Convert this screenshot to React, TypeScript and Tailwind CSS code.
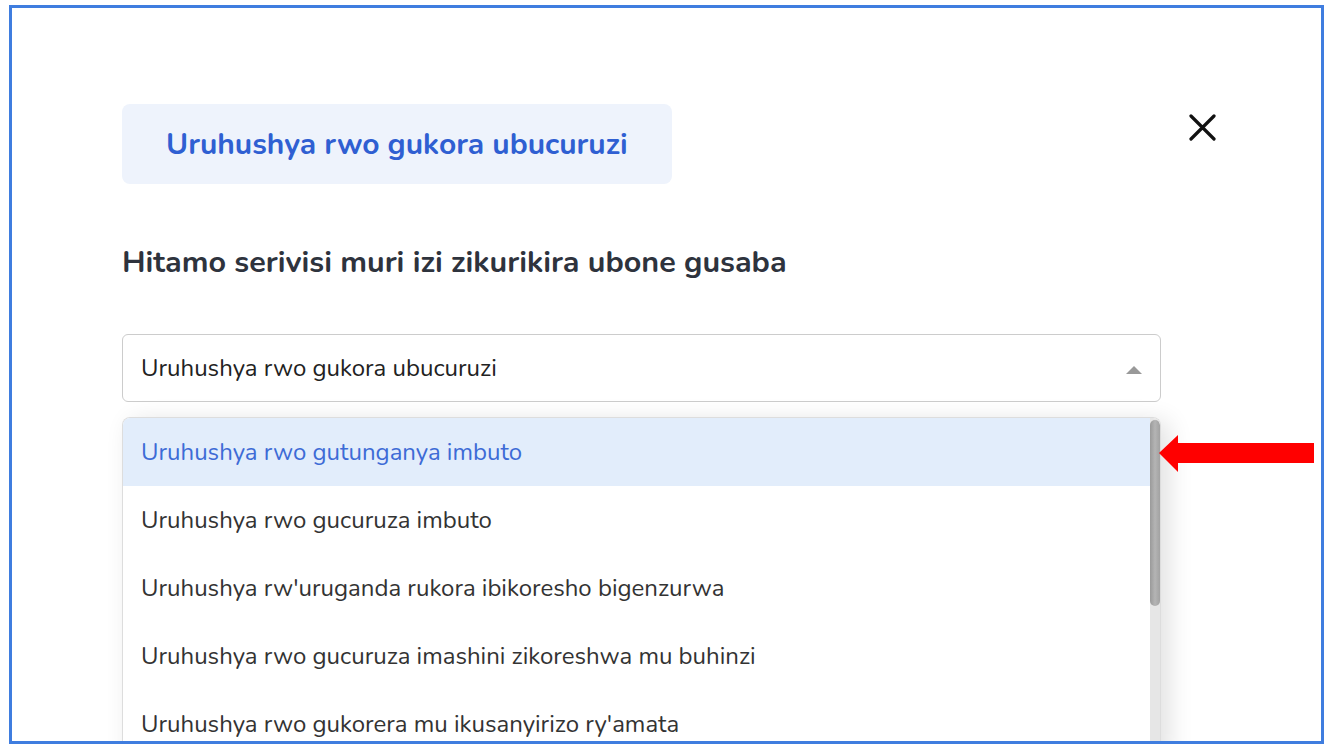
const options = [
  'Uruhushya rwo gutunganya imbuto',
  'Uruhushya rwo gucuruza imbuto',
  "Uruhushya rw'uruganda rukora ibikoresho bigenzurwa",
  'Uruhushya rwo gucuruza imashini zikoreshwa mu buhinzi',
  "Uruhushya rwo gukorera mu ikusanyirizo ry'amata",
]

export default function App() {
  return (
    <div
      className="relative h-[754px] w-[1328px] bg-white pl-[9px] pt-[5px]"
      style={{ fontFamily: '"Nunito", "Open Sans", sans-serif' }}
    >
      <div className="h-[739px] w-[1315px] overflow-hidden border-[3px] border-[#3f7ddf] bg-white">
        <div className="flex pl-[110px] pt-[96px]">
          <div className="flex w-[1039px] flex-col">
            <div className="flex h-[80px] w-fit items-center rounded-lg bg-[#eef3fc] px-[44px]">
              <span className="text-[30px] font-bold text-[#2f5fd2]">
                Uruhushya rwo gukora ubucuruzi
              </span>
            </div>

            <h1 className="mt-[57px] text-[30.5px] font-bold leading-[42px] text-[#2e333d]">
              Hitamo serivisi muri izi zikurikira ubone gusaba
            </h1>

            <div className="mt-[51px] flex h-[68px] items-center justify-between rounded-md border border-[#cccccc] pl-[18px] pr-[18px]">
              <span className="text-[24px] text-[#222222]">Uruhushya rwo gukora ubucuruzi</span>
              <svg width="16" height="10" viewBox="0 0 16 10" className="mt-[4px]">
                <polygon points="8,1 16,9 0,9" fill="#999999" />
              </svg>
            </div>

            <div className="mt-[15px] flex overflow-hidden rounded-t-lg border border-b-0 border-[#dddddd] shadow-[8px_4px_24px_rgba(0,0,0,0.12)]">
              <ul className="flex-1">
                {options.map((o, i) => (
                  <li
                    key={o}
                    className={
                      i === 0
                        ? 'flex h-[68px] items-center bg-[#e2edfb] pl-[18px] text-[24px] text-[#3d6bd6]'
                        : 'flex h-[68px] items-center pl-[18px] text-[24px] text-[#333333]'
                    }
                  >
                    {o}
                  </li>
                ))}
              </ul>
              <div className="w-[10px] bg-[#e6e6e6] pt-[2px]">
                <div className="h-[186px] rounded-full bg-gradient-to-r from-[#9a9a9a] via-[#b4b4b4] to-[#a2a2a2]" />
              </div>
            </div>
          </div>

          <div className="ml-[28px] mt-[10px]">
            <svg width="27" height="27" viewBox="0 0 27 27">
              <path d="M2 2 L25 25 M25 2 L2 25" stroke="#111111" strokeWidth="3.2" strokeLinecap="round" />
            </svg>
          </div>
        </div>
      </div>

      <svg className="absolute left-[1158px] top-[434px]" width="158" height="40" viewBox="0 0 158 40">
        <polygon points="1,19 20,1 20,9 156,9 156,29 20,29 20,38" fill="#ff0000" />
      </svg>
    </div>
  )
}
